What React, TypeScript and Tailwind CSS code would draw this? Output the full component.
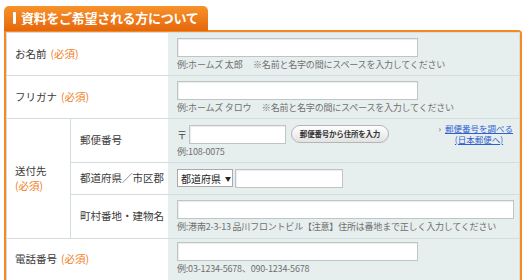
import React from 'react';

const font = { fontFamily: '"Noto Sans CJK JP", "Noto Sans", sans-serif' };

function Required() {
  return <span className="ml-[4px] text-[#ef7d25]">(必須)</span>;
}

function TextInput({ w }: { w: string }) {
  return <div className={`${w} h-[19px] border border-[#bfc5c6] bg-white shadow-[inset_1px_1px_1px_rgba(0,0,0,0.08)]`} />;
}

function Hint({ children }: { children: React.ReactNode }) {
  return <div className="mt-[2px] text-[9px] leading-[11px] tracking-[-0.2px] text-[#707070] whitespace-nowrap">{children}</div>;
}

export default function App() {
  return (
    <div className="min-h-screen bg-white pl-[4px] pt-[5px]" style={font}>
      <div className="w-[518px]">
        <div className="inline-flex h-[25px] w-[204px] items-center rounded-t-[5px] bg-gradient-to-b from-[#f7922a] to-[#e5670a] pl-[9px]">
          <span className="mr-[5px] h-[12px] w-[3px] rounded-[1px] bg-white" />
          <span className="text-[13px] font-bold tracking-[-0.3px] text-white">資料をご希望される方について</span>
        </div>
        <div className="-mt-[1px] rounded-tr-[4px] border-2 border-[#f68a1e] border-b-0">
          <div className="border-l border-r border-t border-[#d6dfdf]">
            <div className="flex h-[43px] border-b border-[#d3dddd]">
              <div className="flex w-[161px] items-center bg-white pl-[8px] text-[10.5px] text-[#3a3a3a]">
                お名前<Required />
              </div>
              <div className="flex-1 bg-[#e7eeee] pl-[9px] pt-[5px]">
                <TextInput w="w-[241px]" />
                <Hint>例:ホームズ 太郎　 ※名前と名字の間にスペースを入力してください</Hint>
              </div>
            </div>

            <div className="flex h-[43px] border-b border-[#d3dddd]">
              <div className="flex w-[161px] items-center bg-white pl-[8px] text-[10.5px] text-[#3a3a3a]">
                フリガナ<Required />
              </div>
              <div className="flex-1 bg-[#e7eeee] pl-[9px] pt-[5px]">
                <TextInput w="w-[241px]" />
                <Hint>例:ホームズ タロウ　 ※名前と名字の間にスペースを入力してください</Hint>
              </div>
            </div>

            <div className="flex border-b border-[#d3dddd]">
              <div className="flex w-[64px] flex-col justify-center border-r border-[#d3dddd] bg-white pl-[8px] text-[10.5px] leading-[15px] text-[#3a3a3a]">
                <span>送付先</span>
                <span className="text-[#ef7d25]">(必須)</span>
              </div>
              <div className="flex-1">
                <div className="flex h-[44px] border-b border-[#d3dddd]">
                  <div className="flex w-[97px] items-center bg-white pl-[9px] text-[10.5px] text-[#3a3a3a]">郵便番号</div>
                  <div className="flex flex-1 bg-[#e7eeee] pl-[9px] pt-[6px]">
                    <div>
                      <div className="flex items-center">
                        <span className="mr-[2px] text-[10px] text-[#444]">〒</span>
                        <TextInput w="w-[97px]" />
                        <button className="ml-[5px] h-[18px] w-[98px] rounded-full border border-[#b5b5b5] bg-gradient-to-b from-white to-[#e2e2e2] text-[7.5px] font-bold tracking-[-0.2px] text-[#333]">
                          郵便番号から住所を入力
                        </button>
                      </div>
                      <Hint>例:108-0075</Hint>
                    </div>
                    <div className="ml-auto mr-[6px] -mt-[2px] flex text-[8.5px] leading-[11px]">
                      <span className="mr-[4px] text-[#666]">›</span>
                      <a className="text-center text-[#2f5fd0] underline">
                        郵便番号を調べる<br />(日本郵便へ)
                      </a>
                    </div>
                  </div>
                </div>
                <div className="flex h-[32px] border-b border-[#d3dddd]">
                  <div className="flex w-[97px] items-center bg-white pl-[9px] text-[10.5px] text-[#3a3a3a]">都道府県／市区郡</div>
                  <div className="flex flex-1 items-center bg-[#e7eeee] pl-[9px]">
                    <div className="flex h-[18px] w-[56px] items-center border border-[#aaa] bg-white pl-[3px] text-[10px] text-[#222]">
                      都道府県<span className="ml-[4px] text-[6px]">▼</span>
                    </div>
                    <div className="ml-[2px]"><TextInput w="w-[108px]" /></div>
                  </div>
                </div>
                <div className="flex h-[43px]">
                  <div className="flex w-[97px] items-center bg-white pl-[9px] text-[10.5px] text-[#3a3a3a]">町村番地・建物名</div>
                  <div className="flex-1 bg-[#e7eeee] pl-[9px] pt-[5px]">
                    <TextInput w="w-[337px]" />
                    <Hint>例:港南2-3-13 品川フロントビル【注意】住所は番地まで正しく入力してください</Hint>
                  </div>
                </div>
              </div>
            </div>

            <div className="flex h-[42px] border-b border-[#d3dddd]">
              <div className="flex w-[161px] items-center bg-white pl-[8px] text-[10.5px] text-[#3a3a3a]">
                電話番号<Required />
              </div>
              <div className="flex-1 bg-[#e7eeee] pl-[9px] pt-[3px]">
                <TextInput w="w-[241px]" />
                <Hint>例:03-1234-5678、090-1234-5678</Hint>
              </div>
            </div>
          </div>
        </div>
      </div>
    </div>
  );
}
